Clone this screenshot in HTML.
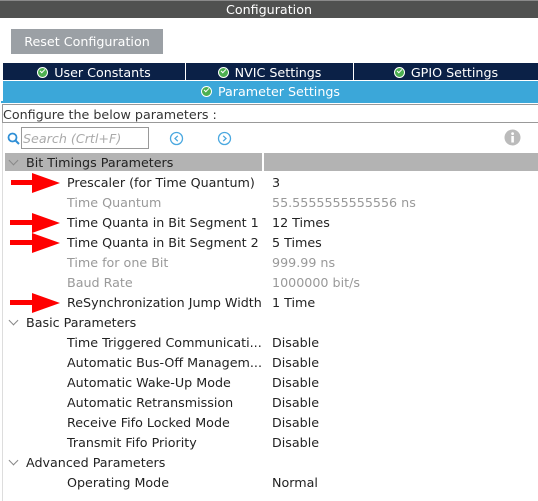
<!DOCTYPE html>
<html><head><style>
*{margin:0;padding:0;box-sizing:border-box}
body{width:538px;height:501px;background:#fff;font-family:"DejaVu Sans","Liberation Sans",sans-serif;font-size:12.7px;color:#222;position:relative;overflow:hidden}
.a{position:absolute;white-space:nowrap}
.title{left:0;top:0;width:538px;height:18px;background:#505150;border-top:1px solid #8a8a8a;color:#fff;text-align:center;line-height:18px}
.btn{left:11px;top:29px;width:152px;height:25px;background:#9ba0a5;color:#fff;text-align:center;line-height:26px}
.tab{top:63px;height:17px;background:#0b2147;color:#fff;text-align:center;line-height:19px}
.chk{display:inline-block;width:11px;height:11px;border-radius:50%;background:#4caf50;border:1px solid #fff;vertical-align:-1px;margin-right:6px;position:relative}
.chk:after{content:"";position:absolute;left:2px;top:1px;width:4px;height:2px;border-left:1.6px solid #fff;border-bottom:1.6px solid #fff;transform:rotate(-45deg)}
.row{left:67px;height:20px;line-height:20px}
.val{left:272px;height:20px;line-height:20px}
.g{color:#999}
.arrow{position:absolute;left:10px;width:52px;height:22px}
.sec{left:7px;height:20px;line-height:20px}
.caret{display:inline-block;width:7px;height:7px;border-right:1.3px solid #888;border-bottom:1.3px solid #888;transform:rotate(45deg);margin:0 9px 3px 3px}
</style></head><body>
<div class="a title">Configuration</div>
<div class="a btn">Reset Configuration</div>
<div class="a tab" style="left:3px;width:182px"><span class="chk"></span>User Constants</div>
<div class="a tab" style="left:186px;width:167px"><span class="chk"></span>NVIC Settings</div>
<div class="a tab" style="left:354px;width:184px"><span class="chk"></span>GPIO Settings</div>
<div class="a" style="left:3px;top:81px;width:535px;height:20px;background:#3ba7d9;color:#fff;text-align:center;line-height:21px"><span class="chk"></span>Parameter Settings</div>
<div class="a" style="left:1px;top:101px;width:537px;height:2px;background:#3ba7d9"></div>
<div class="a" style="left:2px;top:104px;width:540px;height:19px;border:1px solid #999;line-height:19px;color:#333">Configure the below parameters :</div>
<div class="a" style="left:2px;top:123px;width:1px;height:378px;background:#ddd"></div>
<svg class="a" style="left:7px;top:132px" width="14" height="14"><circle cx="5.5" cy="5.5" r="4" fill="none" stroke="#2f8fd6" stroke-width="1.8"/><line x1="8.5" y1="8.5" x2="12" y2="12" stroke="#2f8fd6" stroke-width="2"/></svg>
<div class="a" style="left:21px;top:127px;width:128px;height:22px;border:1px solid #999;color:#aaa;font-style:italic;line-height:21px;padding-left:1px">Search (Crtl+F)</div>
<svg class="a" style="left:169px;top:131px" width="15" height="15"><circle cx="7.5" cy="7.5" r="6" fill="none" stroke="#4aa8e0" stroke-width="1.3"/><path d="M8.8 4.8 L6 7.5 L8.8 10.2" fill="none" stroke="#4aa8e0" stroke-width="1.3"/></svg>
<svg class="a" style="left:217px;top:131px" width="15" height="15"><circle cx="7.5" cy="7.5" r="6" fill="none" stroke="#4aa8e0" stroke-width="1.3"/><path d="M6.2 4.8 L9 7.5 L6.2 10.2" fill="none" stroke="#4aa8e0" stroke-width="1.3"/></svg>
<svg class="a" style="left:504px;top:129px" width="17" height="17"><circle cx="8.5" cy="8.5" r="8" fill="#bbb"/><rect x="7.3" y="7" width="2.6" height="6.5" fill="#fff"/><circle cx="8.6" cy="4.6" r="1.4" fill="#fff"/></svg>
<div class="a" style="left:5px;top:153px;width:533px;height:18px;background:#b3b3b3"></div>
<div class="a" style="left:262px;top:153px;width:2px;height:18px;background:#fff"></div>
<div class="a sec" style="top:153px"><span class="caret"></span>Bit Timings Parameters</div>

<div class="a row" style="top:173px">Prescaler (for Time Quantum)</div><div class="a val" style="top:173px">3</div>
<div class="a row g" style="top:193px">Time Quantum</div><div class="a val g" style="top:193px">55.5555555555556 ns</div>
<div class="a row" style="top:213px">Time Quanta in Bit Segment 1</div><div class="a val" style="top:213px">12 Times</div>
<div class="a row" style="top:233px">Time Quanta in Bit Segment 2</div><div class="a val" style="top:233px">5 Times</div>
<div class="a row g" style="top:253px">Time for one Bit</div><div class="a val g" style="top:253px">999.99 ns</div>
<div class="a row g" style="top:273px">Baud Rate</div><div class="a val g" style="top:273px">1000000 bit/s</div>
<div class="a row" style="top:293px">ReSynchronization Jump Width</div><div class="a val" style="top:293px">1 Time</div>
<div class="a sec" style="top:313px"><span class="caret"></span>Basic Parameters</div>
<div class="a row" style="top:333px">Time Triggered Communicati...</div><div class="a val" style="top:333px">Disable</div>
<div class="a row" style="top:353px">Automatic Bus-Off Managem...</div><div class="a val" style="top:353px">Disable</div>
<div class="a row" style="top:373px">Automatic Wake-Up Mode</div><div class="a val" style="top:373px">Disable</div>
<div class="a row" style="top:393px">Automatic Retransmission</div><div class="a val" style="top:393px">Disable</div>
<div class="a row" style="top:413px">Receive Fifo Locked Mode</div><div class="a val" style="top:413px">Disable</div>
<div class="a row" style="top:433px">Transmit Fifo Priority</div><div class="a val" style="top:433px">Disable</div>
<div class="a sec" style="top:453px"><span class="caret"></span>Advanced Parameters</div>
<div class="a row" style="top:473px">Operating Mode</div><div class="a val" style="top:473px">Normal</div>

<svg class="arrow" style="top:172px" viewBox="0 0 52 22"><rect x="1" y="8" width="24" height="5" fill="#f00"/><path d="M22 1 L50 11 L22 21 Z" fill="#f00"/></svg>
<svg class="arrow" style="top:212px" viewBox="0 0 52 22"><rect x="0" y="8" width="24" height="5" fill="#f00"/><path d="M22 1 L50 11 L22 21 Z" fill="#f00"/></svg>
<svg class="arrow" style="top:232px" viewBox="0 0 52 22"><rect x="0" y="8" width="24" height="5" fill="#f00"/><path d="M22 1 L50 11 L22 21 Z" fill="#f00"/></svg>
<svg class="arrow" style="top:292px" viewBox="0 0 52 22"><rect x="0" y="8" width="24" height="5" fill="#f00"/><path d="M22 1 L50 11 L22 21 Z" fill="#f00"/></svg>
</body></html>
